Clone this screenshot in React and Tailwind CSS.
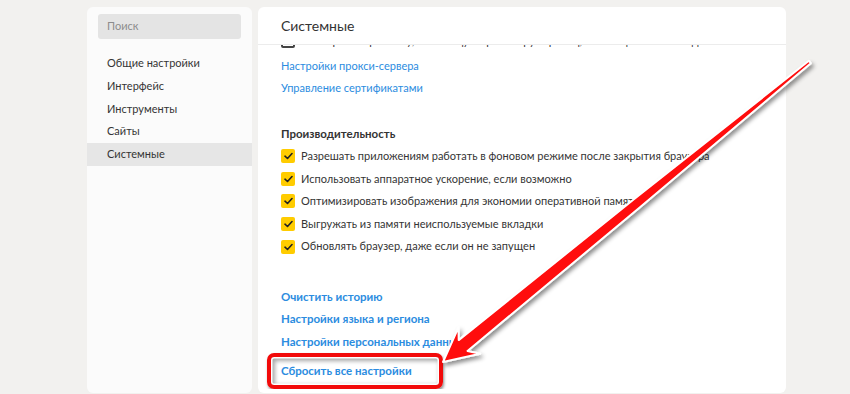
import React from "react";

const font = { fontFamily: 'Lato, "Noto Sans", sans-serif' };

function Check() {
  return (
    <span className="flex h-[14px] w-[14px] shrink-0 items-center justify-center rounded-[2px] bg-[#ffcc00]">
      <svg width="9" height="8" viewBox="0 0 9 8" fill="none">
        <path d="M1 4.2 L3.5 6.5 L8 1.5" stroke="#222" strokeWidth="1.6" strokeLinecap="round" strokeLinejoin="round" />
      </svg>
    </span>
  );
}

const menu = ["Общие настройки", "Интерфейс", "Инструменты", "Сайты", "Системные"];
const checks = [
  "Разрешать приложениям работать в фоновом режиме после закрытия браузера",
  "Использовать аппаратное ускорение, если возможно",
  "Оптимизировать изображения для экономии оперативной памяти",
  "Выгружать из памяти неиспользуемые вкладки",
  "Обновлять браузер, даже если он не запущен",
];
const links = ["Очистить историю", "Настройки языка и региона", "Настройки персональных данных"];

export default function App() {
  return (
    <div className="relative h-[394px] w-[850px] overflow-hidden bg-[#f2f1ef] text-[11px] text-[#353535]" style={font}>
      <div className="flex gap-[6px] pl-[87px] pt-[7px]">
        {/* Sidebar */}
        <div className="flex h-[386px] w-[165px] flex-col rounded-[6px] bg-[#fbfbfb] pt-[7px]">
          <div className="mx-[11px] flex h-[25px] items-center rounded-[3px] bg-[#e4e4e4] pl-[9px] text-[#8c8c8c]">
            Поиск
          </div>
          <div className="mt-[13px] flex flex-col">
            {menu.map((m, i) => (
              <div
                key={m}
                className={
                  "flex h-[22.75px] items-center pl-[20px] " + (i === 4 ? "bg-[#e6e6e6]" : "")
                }
              >
                {m}
              </div>
            ))}
          </div>
        </div>

        {/* Main */}
        <div className="flex h-[386px] w-[528px] flex-col overflow-hidden rounded-[6px] bg-white">
          <div className="flex h-[38px] shrink-0 items-center border-b border-[#ececec] pl-[23px] text-[14px] text-[#333]">
            Системные
          </div>
          <div className="flex flex-col overflow-hidden pl-[23px]">
            <div className="-mt-[13px] flex h-[18px] items-center gap-[6px] whitespace-nowrap">
              <span className="h-[14px] w-[14px] shrink-0 rounded-[2px] border-2 border-[#444]" />
              <span>Блокировать рекламу, мешающую просмотру страниц, и сообщать о неполадках</span>
            </div>
            <div className="mt-[5px] flex h-[22px] items-center text-[#2b8ce0]">Настройки прокси-сервера</div>
            <div className="flex h-[22px] items-center text-[#2b8ce0]">Управление сертификатами</div>
            <div className="mt-[24px] flex h-[22px] items-center text-[11.5px] font-bold text-[#333]">Производительность</div>
            <div className="flex flex-col">
              {checks.map((c) => (
                <div key={c} className="flex h-[22.6px] items-center gap-[6px] whitespace-nowrap">
                  <Check />
                  <span>{c}</span>
                </div>
              ))}
            </div>
            <div className="mt-[27px] flex flex-col whitespace-nowrap text-[11.5px] font-bold text-[#2b8ce0]">
              {links.map((l) => (
                <div key={l} className="flex h-[22.7px] items-center">
                  {l}
                </div>
              ))}
              <div className="-ml-[14px] flex h-[36px] w-[176px] items-center rounded-[7px] border-[4px] border-[#f20a0a] pl-[10px] shadow-[inset_0_0_0_1.5px_#fff,inset_2px_2px_4px_2px_rgba(0,0,0,0.35),1px_2px_3px_rgba(0,0,0,0.45)]">
                Сбросить все настройки
              </div>
            </div>
          </div>
        </div>
      </div>

      {/* Arrow overlay */}
      <svg className="pointer-events-none absolute left-0 top-0" width="850" height="394" viewBox="0 0 850 394">
        <defs>
          <filter id="sh" x="-10%" y="-10%" width="130%" height="130%">
            <feDropShadow dx="2" dy="3" stdDeviation="2" floodColor="#000" floodOpacity="0.45" />
          </filter>
        </defs>
        <polygon
          points="810.8,63.2 639.7,207.6 467.5,350.9 480.1,353.7 443,362 458.5,327.3 458.7,340.1 633.3,199.8 808.9,60.8"
          fill="#ff0a0a"
          stroke="#fff"
          strokeWidth="2"
          strokeLinejoin="round"
          filter="url(#sh)"
        />
      </svg>
    </div>
  );
}
